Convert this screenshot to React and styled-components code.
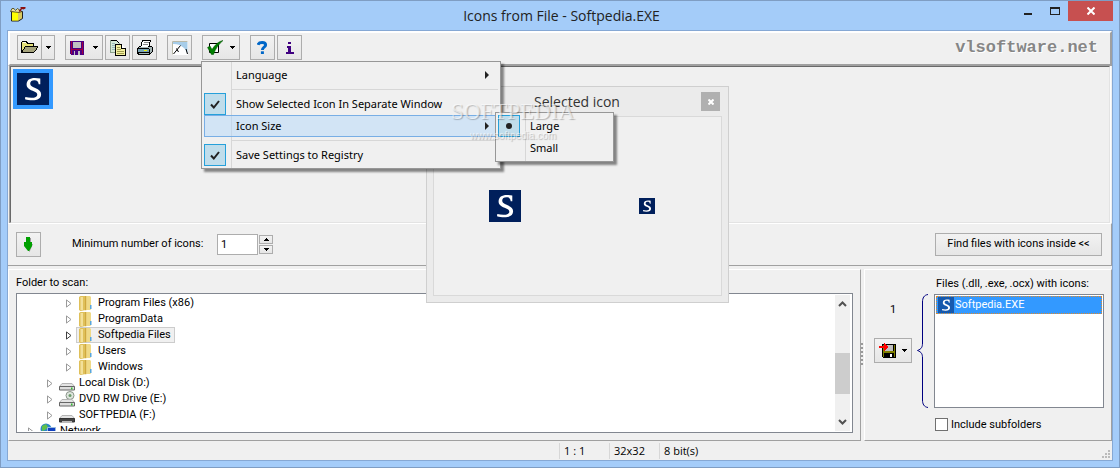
import React, { useState } from 'react'
import styled, { createGlobalStyle, css } from 'styled-components'

const ui = 'Roboto, "DejaVu Sans", sans-serif'
const menuFont = '"Noto Sans", "DejaVu Sans", sans-serif'
const shell = '"Open Sans", "Noto Sans", sans-serif'

const GlobalStyle = createGlobalStyle`
    * {
        box-sizing: border-box;
    }
    body {
        margin: 0;
        font-family: ${ui};
        font-size: 11px;
        line-height: 16px;
        color: #000;
    }
    button, input {
        font: inherit;
        color: inherit;
        padding: 0;
        margin: 0;
    }
    svg {
        display: block;
        flex: none;
    }
`

/* window frame */

const Window = styled.div`
    position: relative;
    display: flex;
    flex-direction: column;
    height: 100vh;
    min-height: 460px;
    padding: 0 6px 6px;
    border: 1px solid #7f9dc3;
    background: #a4ccf9;
    overflow: hidden;
`

const TitleBar = styled.header`
    display: grid;
    grid-template-columns: 1fr auto 1fr;
    height: 29px;
    padding-left: 3px;
    svg {
        margin-top: 5px;
    }
`

const Title = styled.h1`
    margin: 0;
    font: 14px/29px ${shell};
    color: #222;
`

const WindowButtons = styled.div`
    display: flex;
    justify-content: flex-end;
    height: 20px;
`

const WindowButton = styled.button`
    width: ${(p) => (p.$close ? 45 : 27)}px;
    border: 0;
    background: ${(p) => (p.$close ? '#c75050' : 'transparent')};
    display: flex;
    justify-content: center;
    svg {
        margin-top: 6px;
    }
`

const Client = styled.main`
    flex: 1;
    min-height: 0;
    display: flex;
    flex-direction: column;
    border: 1px solid #86a8d4;
    background: #f0f0f0;
`

/* toolbar */

const Toolbar = styled.div`
    flex: none;
    display: flex;
    align-items: center;
    height: 35px;
    padding: 0 12px 2px 7px;
    border: 2px solid #a0a0a0;
    border-top-color: #fff;
    border-left-color: #fff;
`

const ToolGroup = styled.div`
    position: relative;
    display: flex;
    gap: 2px;
    margin-right: 10px;
`

const face = css`
    border: 1px solid #adadad;
    background: linear-gradient(#f2f2f2, #e6e6e6);
`

const ToolButton = styled.button`
    ${face}
    display: flex;
    align-items: center;
    justify-content: ${(p) => (p.$drop ? 'space-between' : 'center')};
    width: ${(p) => (p.$drop ? 38 : 25)}px;
    height: 25px;
    padding: ${(p) => (p.$drop ? '0 4px' : '0')};
`

const SplitDrop = styled.button`
    ${face}
    display: flex;
    align-items: center;
    justify-content: center;
    width: 14px;
    height: 25px;
    margin-left: -3px;
`

const Brand = styled.a`
    margin-left: auto;
    font: bold 17px/20px "Liberation Mono", monospace;
    color: #868686;
    text-decoration: none;
    text-shadow: 1px 1px 0 #fff;
`

/* menus */

const Menu = styled.ul`
    position: absolute;
    z-index: 3;
    margin: 0;
    padding: 2px;
    list-style: none;
    border: 1px solid #979797;
    background: linear-gradient(to right, transparent 27px, #d7d7d7 27px, #d7d7d7 28px, transparent 28px) 2px 0 no-repeat #f0f0f0;
    box-shadow: 3px 3px 2px rgba(0, 0, 0, 0.45);
    font-family: ${menuFont};
    line-height: 20px;
`

const OptionsMenu = styled(Menu)`
    top: 26px;
    left: -1px;
    width: 300px;
`

const SubMenu = styled(Menu)`
    top: -4px;
    left: 290px;
    width: 119px;
`

const MenuItem = styled.li`
    position: relative;
    border: 1px solid ${(p) => (p.$active ? '#78aee5' : 'transparent')};
    background: ${(p) => (p.$active ? 'rgba(179, 215, 249, 0.5)' : 'none')};
`

const MenuButton = styled.button`
    display: flex;
    align-items: center;
    width: 100%;
    height: 20px;
    border: 0;
    background: none;
    text-align: left;
    & > span:nth-child(2) {
        flex: 1;
        white-space: nowrap;
    }
    & > svg {
        margin-right: 8px;
    }
`

const MenuMark = styled.span`
    display: flex;
    align-items: center;
    justify-content: center;
    width: 22px;
    height: 22px;
    margin: 0 10px 0 -1px;
    border: 1px solid ${(p) => (p.$on ? '#26a0da' : 'transparent')};
    background: ${(p) => (p.$on ? '#c0ddeb' : 'none')};
`

const MenuLine = styled.li`
    height: 7px;
    margin-left: 28px;
    padding-top: 3px;
    &::after {
        content: '';
        display: block;
        height: 1px;
        background: #d7d7d7;
    }
`

/* extracted icons */

const IconView = styled.section`
    flex: none;
    min-height: 157px;
    padding: 2px;
    border: 1px solid #696969;
    border-right-color: #e3e3e3;
    border-bottom-color: #e3e3e3;
    margin: 0 2px;
    box-shadow: -1px 0 #a0a0a0, 1px 0 #fff;
`

const Thumb = styled.div`
    width: 40px;
    padding: 4px;
    background: #3399ff;
`

const Options = styled.div`
    flex: none;
    display: flex;
    align-items: center;
    height: 43px;
    padding: 0 9px 1px 8px;
    border-top: 1px solid #fff;
    border-right: 1px solid #a0a0a0;
    border-bottom: 1px solid #a0a0a0;
    label {
        margin: 0 22px 0 31px;
        width: 123px;
        white-space: nowrap;
    }
`

const CountInput = styled.input`
    width: 41px;
    height: 21px;
    padding: 0 3px;
    border: 1px solid #adadad;
    border-radius: 0;
    background: #fff;
    outline: 0;
`

const Spinner = styled.div`
    display: grid;
    gap: 1px;
    margin-left: 1px;
    button {
        ${face}
        display: flex;
        align-items: center;
        justify-content: center;
        width: 14px;
        height: 9px;
    }
`

const PushButton = styled.button`
    ${face}
    height: 23px;
    min-width: 167px;
    margin-left: auto;
    white-space: nowrap;
`

/* lower half */

const Panes = styled.div`
    flex: 1;
    min-height: 0;
    display: flex;
    margin-top: 3px;
`

const Pane = styled.section`
    display: flex;
    border: 1px solid #a0a0a0;
    border-top-color: #fff;
    border-left-color: #fff;
    min-width: 0;
`

const FolderPane = styled(Pane)`
    flex: 1;
    flex-direction: column;
    padding: 5px 7px 7px;
`

const FilePane = styled(Pane)`
    flex: none;
    padding: 0 7px 9px 9px;
`

const Splitter = styled.div`
    display: flex;
    align-items: center;
    width: 3px;
    svg {
        margin-left: -1px;
    }
`

const Caption = styled.div`
    height: 18px;
    white-space: nowrap;
`

const Sunken = styled.div`
    flex: 1;
    min-height: 0;
    display: flex;
    padding: 1px;
    border: 1px solid #828790;
    background: #fff;
`

const Tree = styled.ul`
    flex: 1;
    overflow: hidden;
    margin: 0;
    padding: 0;
    list-style: none;
`

const Node = styled.li`
    display: flex;
    align-items: center;
    height: 16px;
    padding-left: ${(p) => 10 + p.$depth * 19}px;
`

const NodeLabel = styled.span`
    display: flex;
    align-items: center;
    gap: 4px;
    height: 16px;
    margin-left: 4px;
    padding: 0 3px 0 1px;
    border: 1px solid ${(p) => (p.$selected ? '#ccc' : 'transparent')};
    background: ${(p) => (p.$selected ? '#f0f0f0' : 'none')};
    white-space: nowrap;
`

const ScrollTrack = styled.div`
    display: flex;
    flex-direction: column;
    justify-content: space-between;
    align-items: center;
    width: 15px;
    margin-right: 1px;
    padding: 6px 0;
    background: #f0f0f0;
`

const ScrollThumb = styled.div`
    width: 15px;
    height: 41px;
    margin-top: 20px;
    background: #cdcdcd;
`

const SaveColumn = styled.div`
    display: flex;
    flex-direction: column;
    align-items: center;
    gap: 20px;
    padding-top: 32px;
    margin-right: 5px;
`

const Brace = styled.svg`
    margin: 24px 6px 0 0;
`

const FileColumn = styled.div`
    display: flex;
    flex-direction: column;
    width: 170px;
    padding-top: 6px;
    ${Caption} {
        padding-left: 2px;
    }
    label {
        display: flex;
        align-items: center;
        gap: 3px;
        height: 13px;
        margin-top: 10px;
        padding-left: 1px;
        white-space: nowrap;
    }
`

const FileRow = styled.div`
    flex: 1;
    display: flex;
    align-items: center;
    gap: 1px;
    height: 18px;
    padding-left: 1px;
    border: 1px dotted #e08a2c;
    background: #3399ff;
    color: #fff;
`

const CheckBox = styled.input`
    appearance: none;
    width: 13px;
    height: 13px;
    border: 1px solid #707070;
    background: #fff;
`

const StatusBar = styled.footer`
    flex: none;
    display: flex;
    align-items: center;
    height: 19px;
    padding-right: 2px;
    font: 11px/16px ${shell};
    svg {
        margin: 6px 0 0 auto;
    }
`

const StatusCell = styled.div`
    flex: none;
    width: ${(p) => (p.$lead ? '50%' : '50px')};
    height: 16px;
    padding-left: ${(p) => (p.$lead ? 0 : 4)}px;
    border-left: ${(p) => (p.$lead ? 0 : 1)}px solid #d7d7d7;
    white-space: nowrap;
`

/* floating preview */

const Preview = styled.aside`
    position: absolute;
    z-index: 1;
    top: 85px;
    left: 425px;
    display: flex;
    flex-direction: column;
    width: 303px;
    height: 217px;
    padding: 0 6px 6px;
    border: 1px solid #cfcfcf;
    background: #ebebeb;
`

const PreviewTitle = styled.header`
    display: flex;
    align-items: center;
    height: 29px;
    padding-right: 2px;
    font: 14px/28px ${shell};
    color: #333;
    span {
        flex: 1;
        padding-left: 20px;
        text-align: center;
    }
    button {
        display: flex;
        align-items: center;
        justify-content: center;
        width: 19px;
        height: 19px;
        border: 0;
        background: #b0b0b0;
    }
`

const PreviewBody = styled.div`
    flex: 1;
    display: grid;
    grid-template-columns: 1fr 1fr;
    place-items: center;
    padding-right: 3px;
    border: 1px solid #d9d9d9;
    background: #f0f0f0;
`

const Watermark = styled.div`
    position: absolute;
    z-index: 4;
    top: 99px;
    left: 450px;
    display: grid;
    justify-items: center;
    font: 23px/24px "Liberation Serif", serif;
    color: rgba(255, 255, 255, 0.6);
    text-shadow: 1px 1px 1px rgba(0, 0, 0, 0.25);
    pointer-events: none;
    small {
        font-size: 10px;
        font-family: "Liberation Sans", sans-serif;
    }
`

/* drawings */

const SoftIcon = ({ size = 32, fill = '#001f5b' }) => (
    <svg width={size} height={size} viewBox="0 0 32 32">
        <path fill={fill} d="M0 0h32v32H0z" />
        <path
            fill="#fff"
            d="M23.300 5.500v5.800h-1.600c-.3-2.900-1.600-4-4.200-4-2.700 0-4.300 1.200-4.300 3.300 0 2.200 1.500 3 5 4.500 4 1.700 5.900 3.300 5.900 6.200 0 4-3.300 6-8.800 6-2.800 0-5-.4-7.300-1l.3-2.200c2.200.5 4 .7 6 .7 4 0 6-1 6-3.100 0-1.800-1.400-2.600-4.700-4-4.200-1.800-6-3.300-6-6.300 0-4.200 3.200-6.400 8.200-6.400 2 0 3.800.2 5.500.5z"
        />
    </svg>
)

const Px = ({ size = 16, w = size, h = size, children }) => (
    <svg width={w} height={h} viewBox={`0 0 ${w} ${h}`} shapeRendering="crispEdges">
        {children}
    </svg>
)

const Down = () => (
    <Px w={5} h={3}>
        <path d="M0 0h5v1H0zM1 1h3v1H1zM2 2h1v1H2z" />
    </Px>
)

const Up = () => (
    <Px w={5} h={3}>
        <path d="M2 0h1v1H2zM1 1h3v1H1zM0 2h5v1H0z" />
    </Px>
)

const Arrow = () => (
    <svg width="4" height="8" viewBox="0 0 4 8">
        <path fill="#222" d="M0 0l4 4-4 4z" />
    </svg>
)

const AppIcon = () => (
    <svg width="16" height="16" viewBox="0 0 16 16">
        <path fill="#d8c860" stroke="#222" d="M1.500 5.500h11v7l-4 2.500h-7z" />
        <path fill="#ff0" d="M2 6h6v8.500H2z" />
        <path fill="#e8e0a0" stroke="#443c10" strokeWidth=".8" d="M.5 5.500l1.500-3h2l1.500 2 2-2 2 1.500 2.500 1.500-3 1z" />
        <path fill="#8b1010" d="M10 1h5.500v1.500l-2 1-1.500-.5-2 3L8.500 5l2.500-3z" />
    </svg>
)

const OpenIcon = () => (
    <Px w={17} h={13}>
        <path fill="#e6e27a" stroke="#000" d="M.5 11.500v-10l1-1h4l1 2h6v3" />
        <path fill="#a5a37c" stroke="#000" d="M.5 11.500l4-6h12l-1 3-3 3z" />
        <path fill="#fffff0" d="M2 1h3v1H2z" />
    </Px>
)

const SaveIcon = () => (
    <Px w={14} h={14}>
        <path fill="#4b0082" d="M0 0h14v14H1l-1-1z" />
        <path fill="#a00040" d="M1 0h1v13H1zM12 1h1v12h-1zM2 8h10v1H2z" />
        <path fill="#c0c0c0" d="M3 1h8v6H3z" />
        <path fill="#c0c0c0" d="M4 10h6v4H4z" />
        <path fill="#4b0082" d="M5 10h3v4H5z" />
    </Px>
)

const CopyIcon = () => (
    <Px w={16} h={16}>
        <path fill="#d5e8d5" stroke="#8aa08a" d="M.5 12.500V.5h6l3 3v9z" />
        <path stroke="#000" fill="none" d="M1 .5h5.500l3 3" />
        <path fill="#9bb" d="M2 3h3v1H2zM2 5h3v1H2zM2 7h3v1H2zM2 9h3v1H2z" />
        <path fill="#f3f0a0" stroke="#000" d="M5.500 15.500v-11h6l4 4v7z" />
        <path fill="#fff" stroke="#000" d="M11.500 4.500v4h4" />
        <path fill="#a09c50" d="M7 7h3v1H7zM7 9h4v1H7zM7 11h7v1H7zM7 13h7v1H7z" />
    </Px>
)

const PrintIcon = () => (
    <Px w={16} h={15}>
        <path fill="#fff" stroke="#000" d="M3.500 7.500l2-7h8l-2 7z" />
        <path fill="#888" d="M7 2h5v1H7zM6 4h5v1H6z" />
        <path fill="#a5b5b5" stroke="#000" d="M.5 8.500l2-2h12l1 1v4l-3 3h-11l-1-2z" />
        <path fill="#fff" d="M5 5h7l-1 2H4z" />
        <path d="M1 8h11v1H1zM12 9h1v5h-1zM1 12h11v1H1z" />
        <path fill="#7aa5b5" d="M1 9h11v3H1z" />
        <path fill="#ee0" d="M7 10h3v1H7z" />
    </Px>
)

const ChartIcon = () => (
    <svg width="16" height="14" viewBox="0 0 16 14">
        <path fill="#fff" d="M0 0h16v14H0z" />
        <path fill="#a7cde9" d="M1 1h14.500v12C14 7 8 2.500 1 3z" />
        <path stroke="#b9b9a8" fill="none" d="M.5 13.500V.5h15" />
        <path stroke="#000" fill="none" d="M1.500 13L8.500 4.500M4.500 7.500l2 3.500M14 8l1.500 5" />
    </svg>
)

const CheckIcon = () => (
    <svg width="17" height="15" viewBox="0 0 17 15">
        <path fill="#fff" stroke="#000" d="M2.500 3.500h9v9h-9z" />
        <path fill="#008000" stroke="#054d05" strokeWidth=".5" d="M.5 7.500L3 6l2 3.500C7.500 5.500 11 1.500 16 .5 12 4 8.500 8.500 6.500 14.500h-2z" />
    </svg>
)

const HelpIcon = () => (
    <svg width="11" height="13" viewBox="0 0 11 13">
        <path fill="none" stroke="#0067c8" strokeWidth="3" d="M1 3.800C2 .8 8.600.8 8.600 3.900 8.600 6.300 5.400 6 5.400 9" />
        <path fill="#0067c8" d="M3.900 10.300h3V13h-3z" />
    </svg>
)

const InfoIcon = () => (
    <Px w={8} h={12}>
        <path fill="#3f0080" d="M2 0h3v2H2zM1 4h4v6h3v2H0v-2h2V6H1z" />
    </Px>
)

const ExportIcon = () => (
    <Px w={17} h={15}>
        <path d="M3 1h14v14H4l-1-1z" />
        <path fill="#808000" d="M4 2h1v12H4zM15 2h1v12h-1zM5 8h10v2H5z" />
        <path fill="#c0c0c0" d="M6 2h8v6H6z" />
        <path d="M6 10h8v4H6z" />
        <path fill="#fff" d="M11 11h2v3h-2z" />
        <path fill="#f00" d="M0 3h5V0l4 4-4 4V5H0z" />
    </Px>
)

const GreenArrow = () => (
    <svg width="9" height="15" viewBox="0 0 9 15">
        <path fill="#999" d="M3 1h4v6h2L5.500 15 2 9z" />
        <path fill="#00a000" d="M2 0h4v5h2v4l-3 5H4L0 9V5h2z" />
    </svg>
)

const FolderIcon = () => (
    <svg width="16" height="16" viewBox="0 0 16 16">
        <path fill="#dfc05a" d="M1 2l1.500-1H8v14l-5.500 1L1 15z" />
        <path fill="#f3e09a" d="M2.500 2H5v13H2.500z" />
        <path fill="#efd987" d="M7.500 1H12l1 1v12.500l-1 .5H7.500z" />
        <path fill="#cfa940" d="M7 1h1.200v14.500L7 15z" />
        <path fill="#58a6dd" d="M12 10h1.500v4H12z" />
    </svg>
)

const DriveIcon = ({ dark, disc }) => (
    <svg width="16" height="16" viewBox="0 0 16 16">
        {disc && <circle cx="11" cy="4.500" r="4" fill="#dfe6df" stroke="#8a958a" />}
        {disc && <circle cx="11" cy="4.500" r="1.500" fill="#6c9c6c" />}
        <path fill="#e4e4e4" stroke="#b5b5b5" d="M3 8.500h10l2.500 3H.5z" />
        <path fill={dark ? '#444' : '#ddd'} stroke={dark ? '#333' : '#666'} d="M.5 11.500h15v3.500H.5z" />
        {dark && <path fill="#bbb" d="M3 14h10v2H3z" />}
        {!dark && <path fill="#3b3" d="M12 12.500h1.500v2H12z" />}
    </svg>
)

const NetworkIcon = () => (
    <svg width="16" height="16" viewBox="0 0 16 16">
        <circle cx="6" cy="6" r="5.500" fill="#2a86c8" />
        <path fill="#5fc04a" d="M2 3l4-2 2 3-3 3-3 1zM8 5l3-1v4z" />
        <path fill="#1040c0" stroke="#9bd" d="M7.500 4.500h8v6h-8z" />
    </svg>
)

const Expander = ({ active }) => (
    <svg width="6" height="9" viewBox="0 0 6 9">
        <path fill="#fff" stroke={active ? '#404040' : '#9a9a9a'} d="M.5.9v7.200L5 4.500z" />
    </svg>
)

const Chevron = ({ up }) => (
    <svg width="9" height="6" viewBox="0 0 9 6">
        <path fill="none" stroke="#505050" strokeWidth="2" d={up ? 'M1 5l3.500-3.500L8 5' : 'M1 1l3.500 3.500L8 1'} />
    </svg>
)

const Tick = () => (
    <svg width="10" height="9" viewBox="0 0 10 9">
        <path fill="none" stroke="#222" strokeWidth="2" d="M1 4.500l2.800 3L9 1" />
    </svg>
)

const Dot = () => (
    <svg width="6" height="6" viewBox="0 0 6 6">
        <circle cx="3" cy="3" r="3" fill="#222" />
    </svg>
)

const folders = [
    { name: 'Program Files (x86)', depth: 2, icon: <FolderIcon /> },
    { name: 'ProgramData', depth: 2, icon: <FolderIcon /> },
    { name: 'Softpedia Files', depth: 2, icon: <FolderIcon />, selected: true },
    { name: 'Users', depth: 2, icon: <FolderIcon /> },
    { name: 'Windows', depth: 2, icon: <FolderIcon /> },
    { name: 'Local Disk (D:)', depth: 1, icon: <DriveIcon /> },
    { name: 'DVD RW Drive (E:)', depth: 1, icon: <DriveIcon disc /> },
    { name: 'SOFTPEDIA (F:)', depth: 1, icon: <DriveIcon dark /> },
    { name: 'Network', depth: 0, icon: <NetworkIcon /> },
]

const Item = ({ label, mark, active, sub, children }) => (
    <MenuItem $active={active}>
        <MenuButton>
            <MenuMark $on={!!mark}>{mark}</MenuMark>
            <span>{label}</span>
            {sub && <Arrow />}
        </MenuButton>
        {children}
    </MenuItem>
)

const SettingsMenu = () => (
    <OptionsMenu>
        <Item label="Language" sub />
        <MenuLine />
        <Item label="Show Selected Icon In Separate Window" mark={<Tick />} />
        <Item label="Icon Size" sub active>
            <SubMenu>
                <Item label="Large" mark={<Dot />} />
                <Item label="Small" />
            </SubMenu>
        </Item>
        <MenuLine />
        <Item label="Save Settings to Registry" mark={<Tick />} />
    </OptionsMenu>
)

const App = () => {
    const [count, setCount] = useState(1)
    const [deep, setDeep] = useState(false)

    return (
        <Window>
            <GlobalStyle />
            <TitleBar>
                <AppIcon />
                <Title>Icons from File - Softpedia.EXE</Title>
                <WindowButtons>
                    <WindowButton aria-label="Minimize">
                        <Px w={8} h={8}>
                            <path fill="#222" d="M0 6h8v2H0z" />
                        </Px>
                    </WindowButton>
                    <WindowButton aria-label="Maximize">
                        <Px w={10} h={8}>
                            <path fill="#222" fillRule="evenodd" d="M0 0h10v8H0zM1 2v5h8V2z" />
                        </Px>
                    </WindowButton>
                    <WindowButton $close aria-label="Close">
                        <svg width="8" height="8" viewBox="0 0 8 8">
                            <path stroke="#fff" strokeWidth="2" d="M.5.5l7 7M7.500.5l-7 7" />
                        </svg>
                    </WindowButton>
                </WindowButtons>
            </TitleBar>
            <Client>
                <Toolbar>
                    <ToolGroup>
                        <ToolButton aria-label="Open"><OpenIcon /></ToolButton>
                        <SplitDrop aria-label="Recent files"><Down /></SplitDrop>
                    </ToolGroup>
                    <ToolGroup>
                        <ToolButton $drop aria-label="Save"><SaveIcon /><Down /></ToolButton>
                        <ToolButton aria-label="Copy"><CopyIcon /></ToolButton>
                        <ToolButton aria-label="Print"><PrintIcon /></ToolButton>
                    </ToolGroup>
                    <ToolGroup>
                        <ToolButton aria-label="Background"><ChartIcon /></ToolButton>
                    </ToolGroup>
                    <ToolGroup>
                        <ToolButton $drop aria-label="Options"><CheckIcon /><Down /></ToolButton>
                        <SettingsMenu />
                    </ToolGroup>
                    <ToolGroup>
                        <ToolButton aria-label="Help"><HelpIcon /></ToolButton>
                        <ToolButton aria-label="About"><InfoIcon /></ToolButton>
                    </ToolGroup>
                    <Brand href="#site">vlsoftware.net</Brand>
                </Toolbar>
                <IconView>
                    <Thumb><SoftIcon /></Thumb>
                </IconView>
                <Options>
                    <ToolButton aria-label="Extract"><GreenArrow /></ToolButton>
                    <label htmlFor="count">Minimum number of icons:</label>
                    <CountInput id="count" value={count} onChange={(e) => setCount(e.target.value)} />
                    <Spinner>
                        <button aria-label="More" onClick={() => setCount(Number(count) + 1)}><Up /></button>
                        <button aria-label="Fewer" onClick={() => setCount(Number(count) - 1)}><Down /></button>
                    </Spinner>
                    <PushButton>Find files with icons inside &lt;&lt;</PushButton>
                </Options>
                <Panes>
                    <FolderPane>
                        <Caption>Folder to scan:</Caption>
                        <Sunken>
                            <Tree>
                                {folders.map((f) => (
                                    <Node key={f.name} $depth={f.depth}>
                                        <Expander active={f.selected} />
                                        <NodeLabel $selected={f.selected}>
                                            {f.icon}
                                            {f.name}
                                        </NodeLabel>
                                    </Node>
                                ))}
                            </Tree>
                            <ScrollTrack>
                                <Chevron up />
                                <ScrollThumb />
                                <Chevron />
                            </ScrollTrack>
                        </Sunken>
                    </FolderPane>
                    <Splitter>
                        <Px w={3} h={24}>
                            <path
                                fill="none"
                                stroke="#999"
                                strokeWidth="2"
                                strokeDasharray="2 2"
                                d="M2 0v24"
                            />
                        </Px>
                    </Splitter>
                    <FilePane>
                        <SaveColumn>
                            <span>1</span>
                            <ToolButton $drop aria-label="Save all"><ExportIcon /><Down /></ToolButton>
                        </SaveColumn>
                        <Brace width="11" height="114" viewBox="0 0 11 114">
                            <path
                                fill="none"
                                stroke="#000080"
                                d="M11 .5C7 1 5.500 4 5.500 8v41c0 4-1 6-5 7.500 4 1.500 5 3.500 5 7.500v42c0 4 1.500 7 5.500 7.500"
                            />
                        </Brace>
                        <FileColumn>
                            <Caption>Files (.dll, .exe, .ocx) with icons:</Caption>
                            <Sunken>
                                <FileRow>
                                    <SoftIcon size={16} fill="#1659ad" />
                                    Softpedia.EXE
                                </FileRow>
                            </Sunken>
                            <label>
                                <CheckBox type="checkbox" checked={deep} onChange={() => setDeep(!deep)} />
                                Include subfolders
                            </label>
                        </FileColumn>
                    </FilePane>
                </Panes>
                <StatusBar>
                    <StatusCell $lead />
                    <StatusCell>1 : 1</StatusCell>
                    <StatusCell>32x32</StatusCell>
                    <StatusCell>8 bit(s)</StatusCell>
                    <Px w={8} h={8}>
                        <path fill="#bbb" d="M6 0h2v2H6zM3 3h2v2H3zM6 3h2v2H6zM0 6h2v2H0zM3 6h2v2H3zM6 6h2v2H6z" />
                    </Px>
                </StatusBar>
            </Client>
            <Preview>
                <PreviewTitle>
                    <span>Selected icon</span>
                    <button aria-label="Close preview">
                        <svg width="6" height="6" viewBox="0 0 6 6">
                            <path stroke="#fff" strokeWidth="2" d="M.5.5l5 5M5.500.5l-5 5" />
                        </svg>
                    </button>
                </PreviewTitle>
                <PreviewBody>
                    <SoftIcon />
                    <SoftIcon size={16} />
                </PreviewBody>
            </Preview>
            <Watermark>
                SOFTPEDIA
                <small>www.softpedia.com</small>
            </Watermark>
        </Window>
    )
}

export default App
